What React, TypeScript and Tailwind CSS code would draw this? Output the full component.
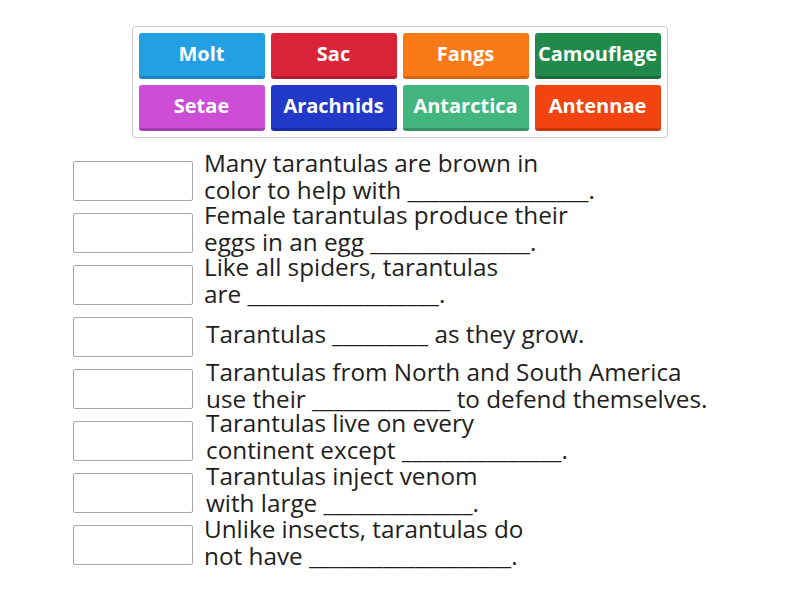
import React from "react";

const tiles = [
  { t: "Molt", c: "bg-[#23a0e4]", b: "border-[#1b84c0]" },
  { t: "Sac", c: "bg-[#d9243a]", b: "border-[#b51a2d]" },
  { t: "Fangs", c: "bg-[#fa7a18]", b: "border-[#d96410]" },
  { t: "Camouflage", c: "bg-[#21894a]", b: "border-[#186c39]" },
  { t: "Setae", c: "bg-[#cc4ed6]", b: "border-[#a93db2]" },
  { t: "Arachnids", c: "bg-[#2238c8]", b: "border-[#1a2ba3]" },
  { t: "Antarctica", c: "bg-[#43b680]", b: "border-[#349567]" },
  { t: "Antennae", c: "bg-[#f14410]", b: "border-[#c8350a]" },
];

const rows: { lines: string[]; pl: string; mt: string }[] = [
  { lines: ["Many tarantulas are brown in", "color to help with _________________."], pl: "pl-[11px]", mt: "-mt-[10px]" },
  { lines: ["Female tarantulas produce their", "eggs in an egg _______________."], pl: "pl-[11px]", mt: "-mt-[10px]" },
  { lines: ["Like all spiders, tarantulas", "are __________________."], pl: "pl-[11px]", mt: "-mt-[10px]" },
  { lines: ["Tarantulas _________ as they grow."], pl: "pl-[13px]", mt: "-mt-[8px]" },
  { lines: ["Tarantulas from North and South America", "use their _____________ to defend themselves."], pl: "pl-[13px]", mt: "-mt-[8px]" },
  { lines: ["Tarantulas live on every", "continent except _______________."], pl: "pl-[13px]", mt: "-mt-[10px]" },
  { lines: ["Tarantulas inject venom", "with large ______________."], pl: "pl-[13px]", mt: "-mt-[8px]" },
  { lines: ["Unlike insects, tarantulas do", "not have ___________________."], pl: "pl-[11px]", mt: "-mt-[6px]" },
];

export default function App() {
  return (
    <div
      className="w-[800px] h-[600px] bg-white overflow-hidden"
      style={{ fontFamily: '"Open Sans", "Liberation Sans", sans-serif' }}
    >
      <div className="pt-[26px] flex justify-center">
        <div className="ml-[-1px] w-[536px] border border-[#c8c8c8] rounded-[4px] p-[6px] grid grid-cols-4 gap-[6px]">
          {tiles.map((x) => (
            <div
              key={x.t}
              className={`${x.c} ${x.b} h-[46px] rounded-[3px] border-b-[3px] flex items-center justify-center text-white font-bold text-[20px] leading-none pb-[2px]`}
            >
              {x.t}
            </div>
          ))}
        </div>
      </div>
      <div className="mt-[17px] pl-[73px] flex flex-col">
        {rows.map((r, i) => (
          <div key={i} className="h-[52px] flex items-center">
            <div className="w-[120px] h-[40px] border border-[#a8a8a8] rounded-[2px] bg-white shrink-0" />
            <div className={`${r.pl} ${r.mt} text-[24.3px] leading-[27px] text-[#1e1e1e] whitespace-nowrap`}>
              {r.lines.map((l, j) => (
                <div key={j}>{l}</div>
              ))}
            </div>
          </div>
        ))}
      </div>
    </div>
  );
}
